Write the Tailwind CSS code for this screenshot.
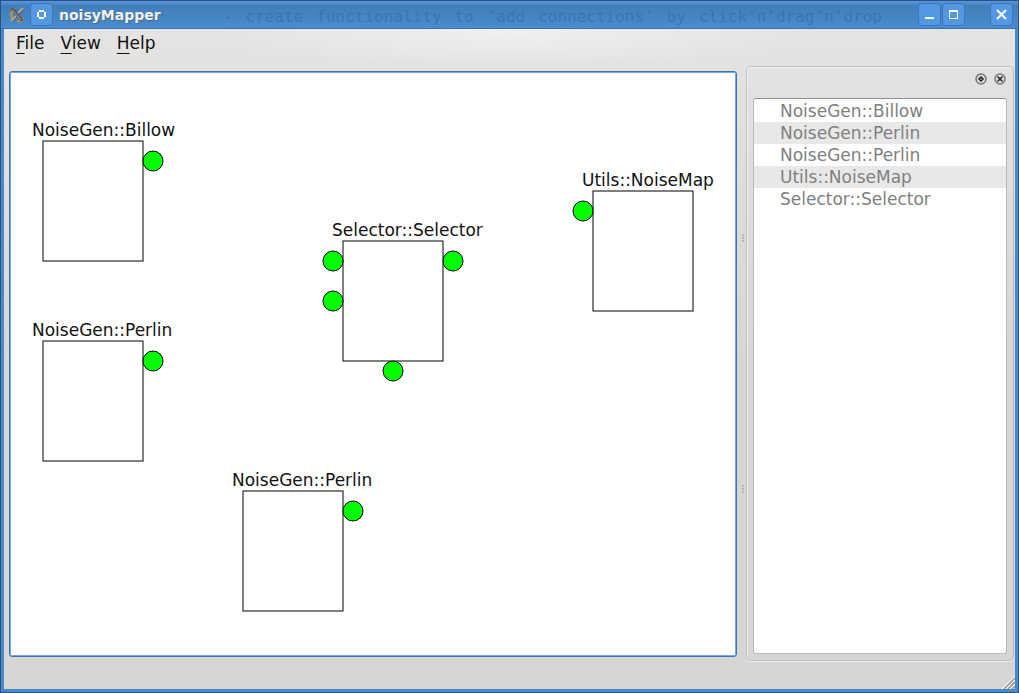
<!DOCTYPE html>
<html lang="en" class="h-full">
<head>
<meta charset="utf-8">
<title>noisyMapper</title>
<script src="https://cdn.jsdelivr.net/npm/@tailwindcss/browser@4"></script>
</head>
<body class="h-full min-h-screen font-['DejaVu_Sans',sans-serif] text-[17px] text-[#111]">
<div class="flex h-screen flex-col overflow-hidden border border-[#2f4f7c] bg-[#4689cc]">
  <header class="relative flex h-7 shrink-0 items-center overflow-hidden border-b border-[#3b70ae] bg-linear-to-b from-[#5498e2] via-[#427eb9] via-20% to-[#4a8ccf] pr-[5px] pl-1">
    <p aria-hidden="true" class="absolute top-1 left-[222px] flex w-[659px] justify-between font-['DejaVu_Sans_Mono',monospace] text-base leading-6 whitespace-nowrap text-[#3a74b3]"><span>-</span> <span>create</span> <span>functionality</span> <span>to</span> <span>'add</span> <span>connections'</span> <span>by</span> <span>click'n'drag'n'drop</span></p>
    <svg class="ml-1 size-4 shrink-0" viewBox="0 0 16 16" fill="none" aria-hidden="true">
      <path d="M6 2C2 4 1 9 4 13" stroke="#d98a35" stroke-width="2"/>
      <path d="M8 14c3 1 5 0 6-3" stroke="#c58a49" stroke-width="2"/>
      <path d="M14 2 3 14" stroke="#5b6062" stroke-width="3"/>
      <path d="M14 1 8 7M7 9l-5 5" stroke="#a8aaa8" stroke-width="2"/>
      <path d="M2 2h3l9 11-2 1z" fill="#666a6c" stroke="#45494c"/>
      <path d="m3 3 9 10" stroke="#999c9b"/>
    </svg>
    <button aria-label="Window menu" class="ml-[5px] flex size-[23px] shrink-0 items-center justify-center rounded-sm border border-[#3d76b8] bg-[#5298e3]">
      <svg class="size-[9px]" viewBox="0 0 9 9"><path d="M2 0h5v2H2zM2 7h5v2H2zM0 2h2v5H0zM7 2h2v5H7z" fill="#fff"/></svg>
    </button>
    <h1 class="relative ml-1.5 grow text-sm leading-6 font-bold text-[#f2f2f2] [text-shadow:1px_1px_1px_#456789]">noisyMapper</h1>
    <button aria-label="Minimize" class="relative flex size-[23px] items-center justify-center rounded-sm border border-[#3d76b8] bg-[#5298e3]"><svg class="size-[11px]" viewBox="0 0 11 11"><path d="M1 9h9" stroke="#fff" stroke-width="2"/></svg></button>
    <button aria-label="Maximize" class="relative ml-px flex size-[23px] items-center justify-center rounded-sm border border-[#3d76b8] bg-[#5298e3]"><svg class="size-[11px]" viewBox="0 0 11 11"><path d="M1 1.500h9M1.500 1v9M9.500 1v9M1 9.500h9M1 2.500h9" stroke="#fff"/></svg></button>
    <button aria-label="Close" class="relative ml-[25px] flex size-[23px] items-center justify-center rounded-sm border border-[#3d76b8] bg-[#5298e3]"><svg class="size-[11px]" viewBox="0 0 11 11"><path d="m1 1 9 9m0-9-9 9" stroke="#fff" stroke-width="2"/></svg></button>
  </header>
  <div class="relative mx-[3px] mb-[3px] flex min-h-0 grow flex-col bg-linear-to-b from-[#e5e4e2] to-[#d7d6d4] to-50%">
    <div class="absolute inset-x-0 top-0 h-10 bg-radial-[ellipse_30%_100%_at_50%_0%] from-[#f0f0f1] to-transparent"></div>
    <nav class="relative flex h-7 shrink-0 items-center gap-4 px-3 leading-6">
      <button><span class="underline underline-offset-4">F</span>ile</button>
      <button><span class="underline underline-offset-4">V</span>iew</button>
      <button><span class="underline underline-offset-4">H</span>elp</button>
    </nav>
    <main class="relative flex min-h-0 grow pt-[9px] pr-px pb-7 pl-[5px]">
      <section aria-label="Canvas" class="relative mt-[5px] mb-1 grow overflow-hidden rounded-[3px] border border-[#3875be] bg-white p-px shadow-[inset_0_0_0_1px_#7ba5d8]">
        <svg class="size-full font-['DejaVu_Sans',sans-serif] text-[17px]" fill="#111">
          <defs>
            <rect id="box" width="100" height="120" fill="#fff" stroke="#000"/>
            <circle id="port" r="10" fill="#0f0" stroke="#000"/>
          </defs>
          <g transform="translate(32 68)"><text x="-11" y="-5">NoiseGen::Billow</text><use href="#box"/><use href="#port" x="110" y="20"/></g>
          <g transform="translate(32 268)"><text x="-11" y="-5">NoiseGen::Perlin</text><use href="#box"/><use href="#port" x="110" y="20"/></g>
          <g transform="translate(232 418)"><text x="-11" y="-5">NoiseGen::Perlin</text><use href="#box"/><use href="#port" x="110" y="20"/></g>
          <g transform="translate(332 168)"><text x="-11" y="-5">Selector::Selector</text><use href="#box"/><use href="#port" x="-10" y="20"/><use href="#port" x="-10" y="60"/><use href="#port" x="110" y="20"/><use href="#port" x="50" y="130"/></g>
          <g transform="translate(582 118)"><text x="-11" y="-5">Utils::NoiseMap</text><use href="#box"/><use href="#port" x="-10" y="20"/></g>
        </svg>
      </section>
      <div class="flex w-[9px] shrink-0 flex-col items-end justify-center gap-[243px] pr-0.5" aria-hidden="true">
        <i class="h-2 w-0.5 border-l-2 border-dotted border-[#b8b7b5]"></i>
        <i class="h-2 w-0.5 border-l-2 border-dotted border-[#b8b7b5]"></i>
      </div>
      <aside class="flex w-[268px] shrink-0 flex-col rounded-[5px] border border-[#bebdbb] px-1.5 pb-1.5 shadow-[inset_1px_1px_0_#f3f3f2,0_1px_0_#eeedec]">
        <div class="flex h-[31px] shrink-0 items-start justify-end gap-[7px] pt-1.5 pr-px">
          <button aria-label="Float panel" class="size-3"><svg class="size-3" viewBox="0 0 12 12" fill="none"><circle cx="6" cy="6" r="5" fill="#ddd" stroke="#777" stroke-width="1.500"/><path d="m6 4 2 2-2 2-2-2z" stroke="#222" stroke-width="1.500"/></svg></button>
          <button aria-label="Close panel" class="size-3"><svg class="size-3" viewBox="0 0 12 12" fill="none"><circle cx="6" cy="6" r="5" fill="#ddd" stroke="#777" stroke-width="1.500"/><path d="m3.500 3.500 5 5m0-5-5 5" stroke="#222" stroke-width="1.500"/></svg></button>
        </div>
        <ul class="grow rounded-[3px] border border-[#bab9b7] border-t-[#929292] bg-white pt-px leading-[22px] text-[#808080]">
          <li class="pl-[26px]">NoiseGen::Billow</li>
          <li class="bg-[#e8e8e8] pl-[26px]">NoiseGen::Perlin</li>
          <li class="pl-[26px]">NoiseGen::Perlin</li>
          <li class="bg-[#e8e8e8] pl-[26px]">Utils::NoiseMap</li>
          <li class="pl-[26px]">Selector::Selector</li>
        </ul>
      </aside>
    </main>
    <svg class="absolute right-0 bottom-0 size-[13px]" viewBox="0 0 13 13" aria-hidden="true"><path d="M0 13 13 0M4 13l9-9M8 13l5-5" stroke="#fff"/><path d="M2 13 13 2M6 13l7-7M10 13l3-3" stroke="#999" stroke-width="1.500"/></svg>
  </div>
</div>
</body>
</html>
